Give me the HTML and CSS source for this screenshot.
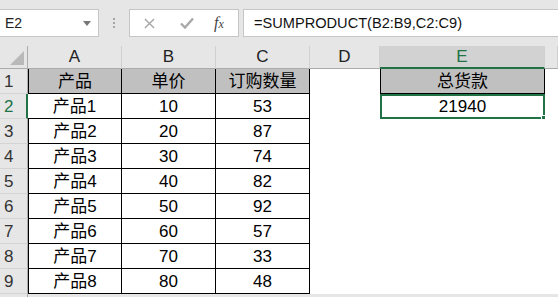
FILE: index.html
```html
<!DOCTYPE html>
<html lang="zh-CN">
<head>
  <meta charset="UTF-8" />
  <title>SUMPRODUCT</title>
  <link rel="stylesheet" href="styles.css">
</head>
<body>
  <div class="toolbar">
    <div class="name-box">
      <span>E2</span>
      <svg class="caret" viewBox="0 0 8 5"><path d="M0 0h8L4 5z"/></svg>
    </div>
    <div class="grip"><i></i><i></i><i></i></div>
    <div class="fx-buttons">
      <svg class="btn-cancel" viewBox="0 0 12 12"><path d="M1 1l10 10M11 1L1 11"/></svg>
      <svg class="btn-enter" viewBox="0 0 14 12"><path d="M1 6.5l4 4L13 1.5"/></svg>
      <span class="fx"><i>f</i><i class="x">x</i></span>
    </div>
    <div class="formula">=SUMPRODUCT(B2:B9,C2:C9)</div>
  </div>

  <div class="sheet">
    <div class="corner"><span class="tri"></span></div>
    <div class="col-head">A</div>
    <div class="col-head">B</div>
    <div class="col-head">C</div>
    <div class="col-head">D</div>
    <div class="col-head selected">E</div>
    <div class="col-head"></div>

    <div class="row-head">1</div>
    <div class="cell boxed title first">产品</div>
    <div class="cell boxed title">单价</div>
    <div class="cell boxed title">订购数量</div>
    <div class="cell"></div>
    <div class="cell total-title">总货款</div>
    <div class="cell"></div>

    <div class="row-head selected">2</div>
    <div class="cell boxed first">产品1</div>
    <div class="cell boxed">10</div>
    <div class="cell boxed">53</div>
    <div class="cell"></div>
    <div class="cell active">21940<span class="handle"></span></div>
    <div class="cell"></div>

    <div class="row-head">3</div>
    <div class="cell boxed first">产品2</div>
    <div class="cell boxed">20</div>
    <div class="cell boxed">87</div>
    <div class="cell"></div>
    <div class="cell"></div>
    <div class="cell"></div>

    <div class="row-head">4</div>
    <div class="cell boxed first">产品3</div>
    <div class="cell boxed">30</div>
    <div class="cell boxed">74</div>
    <div class="cell"></div>
    <div class="cell"></div>
    <div class="cell"></div>

    <div class="row-head">5</div>
    <div class="cell boxed first">产品4</div>
    <div class="cell boxed">40</div>
    <div class="cell boxed">82</div>
    <div class="cell"></div>
    <div class="cell"></div>
    <div class="cell"></div>

    <div class="row-head">6</div>
    <div class="cell boxed first">产品5</div>
    <div class="cell boxed">50</div>
    <div class="cell boxed">92</div>
    <div class="cell"></div>
    <div class="cell"></div>
    <div class="cell"></div>

    <div class="row-head">7</div>
    <div class="cell boxed first">产品6</div>
    <div class="cell boxed">60</div>
    <div class="cell boxed">57</div>
    <div class="cell"></div>
    <div class="cell"></div>
    <div class="cell"></div>

    <div class="row-head">8</div>
    <div class="cell boxed first">产品7</div>
    <div class="cell boxed">70</div>
    <div class="cell boxed">33</div>
    <div class="cell"></div>
    <div class="cell"></div>
    <div class="cell"></div>

    <div class="row-head">9</div>
    <div class="cell boxed first">产品8</div>
    <div class="cell boxed">80</div>
    <div class="cell boxed">48</div>
    <div class="cell"></div>
    <div class="cell"></div>
    <div class="cell"></div>

    <div class="row-head"></div>
  </div>
</body>
</html>
```

FILE: styles.css
```css
* { box-sizing: border-box; }

body {
  margin: 0;
  width: 558px;
  height: 297px;
  overflow: hidden;
  background-color: #e6e6e6;
  font-family: 'Liberation Sans', 'Noto Sans CJK SC', sans-serif;
  color: #000;
}

/* formula bar */
.toolbar {
  display: flex;
  align-items: center;
  height: 46px;
  padding-bottom: 8px;
  padding-top: 8px;
}

.name-box {
  width: 99px;
  height: 28px;
  background-color: #fff;
  border: 1px solid #c6c6c6;
  border-left: none;
  display: flex;
  align-items: center;
  justify-content: space-between;
  padding: 0 7px 0 5px;
  font-size: 14px;
  color: #222;
}

.caret { width: 8px; height: 5px; fill: #777; }

.grip {
  width: 30px;
  display: flex;
  flex-direction: column;
  align-items: center;
  gap: 2px;
}

.grip i {
  width: 2px;
  height: 2px;
  background-color: #a6a6a6;
}

.fx-buttons {
  width: 110px;
  height: 28px;
  background-color: #fff;
  border: 1px solid #c6c6c6;
  display: flex;
  align-items: center;
  padding-left: 14px;
}

.btn-cancel {
  width: 11px;
  height: 11px;
  stroke: #a8a8a8;
  stroke-width: 1.6;
  fill: none;
}

.btn-enter {
  width: 14px;
  height: 12px;
  margin-left: 25px;
  stroke: #a8a8a8;
  stroke-width: 2.4;
  fill: none;
}

.fx {
  margin-left: 20px;
  font-family: 'Liberation Serif', serif;
  font-size: 16px;
  color: #444;
}

.fx .x { font-size: 12px; }

.formula {
  flex: 1;
  height: 28px;
  margin-left: 4px;
  background-color: #fff;
  border: 1px solid #c6c6c6;
  border-right: none;
  display: flex;
  align-items: center;
  padding-left: 10px;
  font-size: 14.6px;
  color: #111;
}

/* grid */
.sheet {
  display: grid;
  grid-template-columns: 28px 94px 94px 94px 70px 165px 1fr;
  grid-template-rows: 23px;
  grid-auto-rows: 25px;
  font-size: 17px;
  line-height: 20px;
}

.corner {
  position: relative;
  border-right: 1px solid #ababab;
  border-bottom: 1px solid #ababab;
}

.tri {
  position: absolute;
  right: 3px;
  bottom: 3px;
  width: 0;
  height: 0;
  border-left: 14px solid transparent;
  border-bottom: 14px solid #b9b9b9;
}

.col-head {
  display: flex;
  align-items: flex-end;
  justify-content: center;
  padding-bottom: 1px;
  border-right: 1px solid #d0d0d0;
  border-bottom: 1px solid #ababab;
  color: #222;
}

.col-head.selected {
  background-color: #d2d2d2;
  color: #217346;
  border-bottom: 2px solid #217346;
  padding-bottom: 0;
}

.row-head {
  display: flex;
  align-items: flex-end;
  padding-left: 4px;
  padding-bottom: 1px;
  border-right: 1px solid #ababab;
  border-bottom: 1px solid #d4d4d4;
  color: #333;
  grid-column: 1;
}

.row-head.selected {
  color: #217346;
  border-right: 2px solid #217346;
}

.cell {
  background-color: #fff;
  display: flex;
  align-items: flex-end;
  justify-content: center;
  padding-bottom: 1px;
  position: relative;
}

.cell.boxed {
  border-right: 1px solid #000;
  border-bottom: 1px solid #000;
}

.cell.first { border-left: 1px solid #000; }
.row-head.selected + .cell.first { border-left: none; }

.cell.title { background-color: #c0c0c0; }

.total-title {
  background-color: #c0c0c0;
  border: 1px solid #000;
  border-top: none;
}

.active {
  border: 2px solid #217346;
  padding-bottom: 0;
}

.handle {
  position: absolute;
  right: -4px;
  bottom: -4px;
  width: 6px;
  height: 6px;
  background-color: #217346;
  border: 1px solid #fff;
}
```
